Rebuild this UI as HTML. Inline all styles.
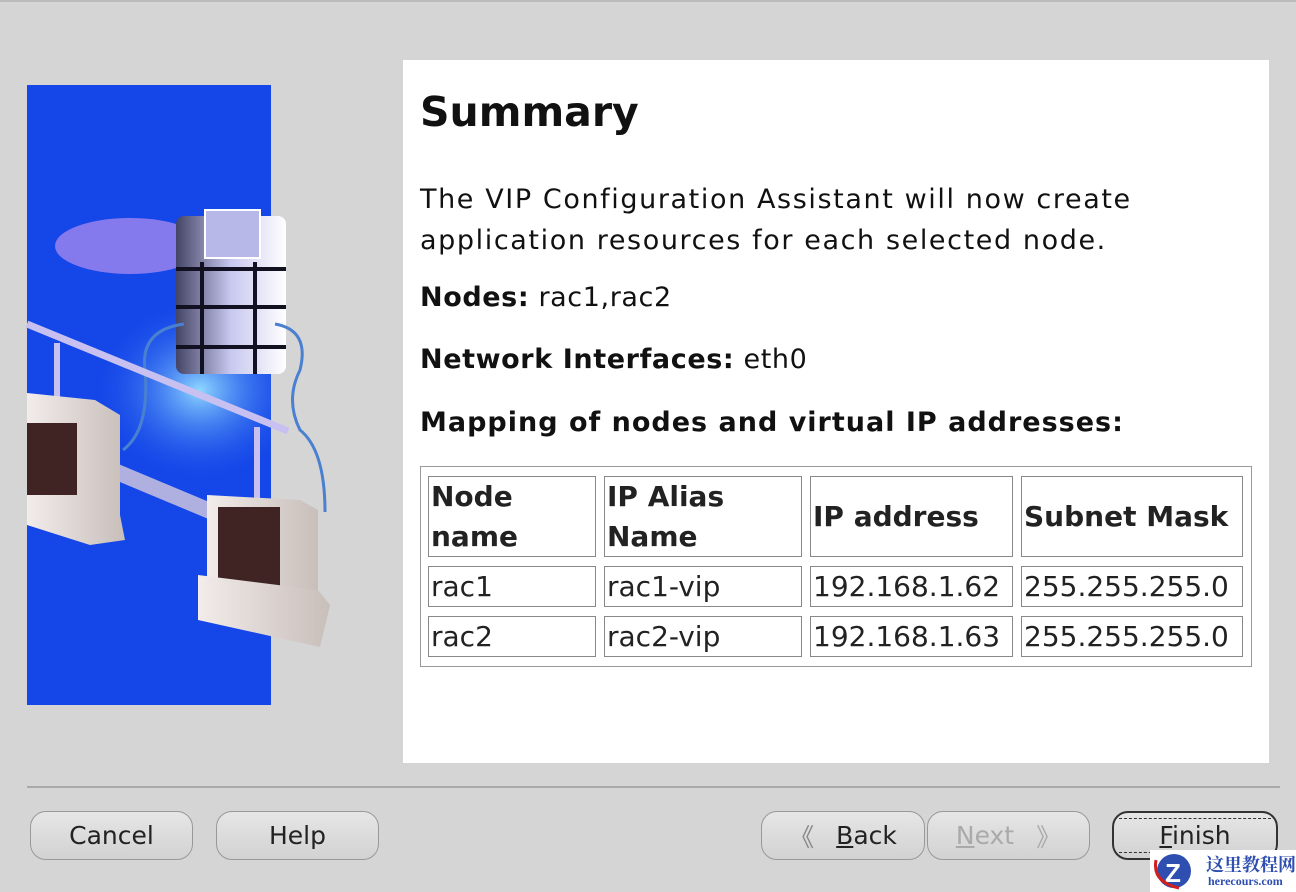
<!DOCTYPE html>
<html><head><meta charset="utf-8"><style>
body{margin:0;width:1296px;height:892px;background:#d5d5d5;position:relative;overflow:hidden;font-family:"DejaVu Sans","Liberation Sans",sans-serif;}
.abs{position:absolute}
#white{left:403px;top:60px;width:866px;height:703px;background:#fff}
.t{position:absolute;left:420px;color:#111;font-size:27px;white-space:nowrap}
.b{font-weight:bold}
.cell{position:absolute;border:1px solid #888;box-sizing:border-box;font-size:28px;color:#222;padding-left:2px;display:flex;align-items:center;line-height:40px}
.btn{position:absolute;top:811px;height:49px;border:1.5px solid #999;border-radius:16px;box-sizing:border-box;background:linear-gradient(#e6e6e6,#d2d2d2);font-size:25px;color:#222;display:flex;align-items:center;justify-content:center}
</style></head><body>
<div class="abs" style="left:0;top:0;width:1296px;height:2px;background:#bbb"></div>
<svg class="abs" style="left:0;top:0" width="400" height="720">
<defs><radialGradient id="g" cx="0.5" cy="0.5" r="0.5"><stop offset="0" stop-color="#8fd8ff"/><stop offset="1" stop-color="#1446e8" stop-opacity="0"/></radialGradient>
<linearGradient id="c" x1="0" x2="1"><stop offset="0" stop-color="#444466"/><stop offset="0.5" stop-color="#c8c8f0"/><stop offset="1" stop-color="#fff"/></linearGradient>
<linearGradient id="m" x1="0" x2="1"><stop offset="0" stop-color="#f2ecea"/><stop offset="1" stop-color="#c8beba"/></linearGradient>
<clipPath id="cp"><rect x="27" y="85" width="244" height="620"/></clipPath></defs>
<rect x="27" y="85" width="244" height="620" fill="#1446e8"/>
<g clip-path="url(#cp)">
<ellipse cx="130" cy="246" rx="75" ry="28" fill="#b48ef0" opacity="0.7"/>
<ellipse cx="200" cy="390" rx="110" ry="95" fill="url(#g)"/>
</g>
<rect x="176" y="216" width="110" height="158" rx="8" fill="url(#c)"/>
<g stroke="#112" stroke-width="4"><line x1="176" y1="269" x2="286" y2="269"/><line x1="176" y1="307" x2="286" y2="307"/><line x1="176" y1="347" x2="286" y2="347"/><line x1="202" y1="262" x2="202" y2="374"/><line x1="255" y1="262" x2="255" y2="374"/></g>
<rect x="205" y="210" width="55" height="48" fill="#b8b8e8" stroke="#fff" stroke-width="2"/>
<path d="M184 324 Q140 330 145 370 Q150 430 123 450" stroke="#4a80d0" stroke-width="3" fill="none"/>
<path d="M275 324 Q310 330 300 370 Q285 400 300 430 Q325 450 325 512" stroke="#4a80d0" stroke-width="3" fill="none"/>
<line x1="27" y1="324" x2="288" y2="431" stroke="#c8c0f0" stroke-width="7"/>
<line x1="57" y1="343" x2="57" y2="402" stroke="#c8c0f0" stroke-width="6"/>
<line x1="257" y1="427" x2="257" y2="507" stroke="#c8c0f0" stroke-width="6"/>
<path d="M100 465 L210 511" stroke="#b0b0e0" stroke-width="16"/>
<path d="M27 393 L95 400 L120 415 L120 515 L125 540 L90 545 L27 525Z" fill="url(#m)"/>
<rect x="27" y="423" width="50" height="72" fill="#402424"/>
<path d="M207 495 L300 500 L318 510 L318 604 L207 590Z" fill="url(#m)"/>
<rect x="218" y="507" width="62" height="89" fill="#402424"/>
<path d="M198 575 L318 590 L330 605 L320 647 L198 620Z" fill="url(#m)"/>
</svg>
<div id="white" class="abs"></div>
<div class="t b" style="top:88px;font-size:41px">Summary</div>
<div class="t" style="top:179px;line-height:41px;letter-spacing:1.6px">The VIP Configuration Assistant will now create<br>application resources for each selected node.</div>
<div class="t" style="top:282px;letter-spacing:0.6px"><span class="b">Nodes:</span> rac1,rac2</div>
<div class="t" style="top:344px;letter-spacing:0.6px"><span class="b">Network Interfaces:</span> eth0</div>
<div class="t b" style="top:407px;letter-spacing:1px">Mapping of nodes and virtual IP addresses:</div>
<div class="abs" style="left:420px;top:466px;width:832px;height:201px;border:1px solid #999;box-sizing:border-box"></div>
<div class="cell b" style="left:428px;top:476px;width:168px;height:81px">Node<br>name</div>
<div class="cell b" style="left:604px;top:476px;width:198px;height:81px">IP Alias<br>Name</div>
<div class="cell b" style="left:810px;top:476px;width:203px;height:81px">IP address</div>
<div class="cell b" style="left:1021px;top:476px;width:222px;height:81px">Subnet Mask</div>
<div class="cell" style="left:428px;top:566px;width:168px;height:41px">rac1</div>
<div class="cell" style="left:604px;top:566px;width:198px;height:41px">rac1-vip</div>
<div class="cell" style="left:810px;top:566px;width:203px;height:41px">192.168.1.62</div>
<div class="cell" style="left:1021px;top:566px;width:222px;height:41px">255.255.255.0</div>
<div class="cell" style="left:428px;top:616px;width:168px;height:41px">rac2</div>
<div class="cell" style="left:604px;top:616px;width:198px;height:41px">rac2-vip</div>
<div class="cell" style="left:810px;top:616px;width:203px;height:41px">192.168.1.63</div>
<div class="cell" style="left:1021px;top:616px;width:222px;height:41px">255.255.255.0</div>
<div class="abs" style="left:27px;top:786px;width:1253px;height:2px;background:#aaa"></div>
<div class="btn" style="left:30px;width:163px">Cancel</div>
<div class="btn" style="left:216px;width:163px">Help</div>
<div class="btn" style="left:761px;width:164px"><span style="color:#888;margin-right:22px">&#x300A;</span><u>B</u>ack</div>
<div class="btn" style="left:927px;width:163px;color:#aaa"><u>N</u>ext<span style="margin-left:22px">&#x300B;</span></div>
<div class="btn" style="left:1112px;width:166px;border:2px solid #333"><span style="border-top:1px dashed #333;border-bottom:1px dashed #333;padding:2px 40px"><u>F</u>inish</span></div>
<div class="abs" style="left:1150px;top:850px;width:146px;height:42px;background:#fff">
<svg class="abs" style="left:4px;top:2px" width="40" height="38"><circle cx="20" cy="19" r="17" fill="#2e4fb0"/><text x="11" y="30" font-size="26" font-weight="bold" fill="#fff" font-family="Liberation Sans">Z</text><path d="M2 8 Q-2 30 25 36" stroke="#d02020" stroke-width="3" fill="none"/></svg>
<div class="abs" style="left:56px;top:1px;font-size:18px;font-weight:bold;color:#2e4fb0;font-family:'Liberation Serif','Noto Serif CJK SC',serif">这里教程网</div>
<div class="abs" style="left:58px;top:24px;font-size:12px;font-weight:bold;color:#2e4fb0;font-family:'Liberation Serif',serif">herecours.com</div>
</div>
</body></html>
